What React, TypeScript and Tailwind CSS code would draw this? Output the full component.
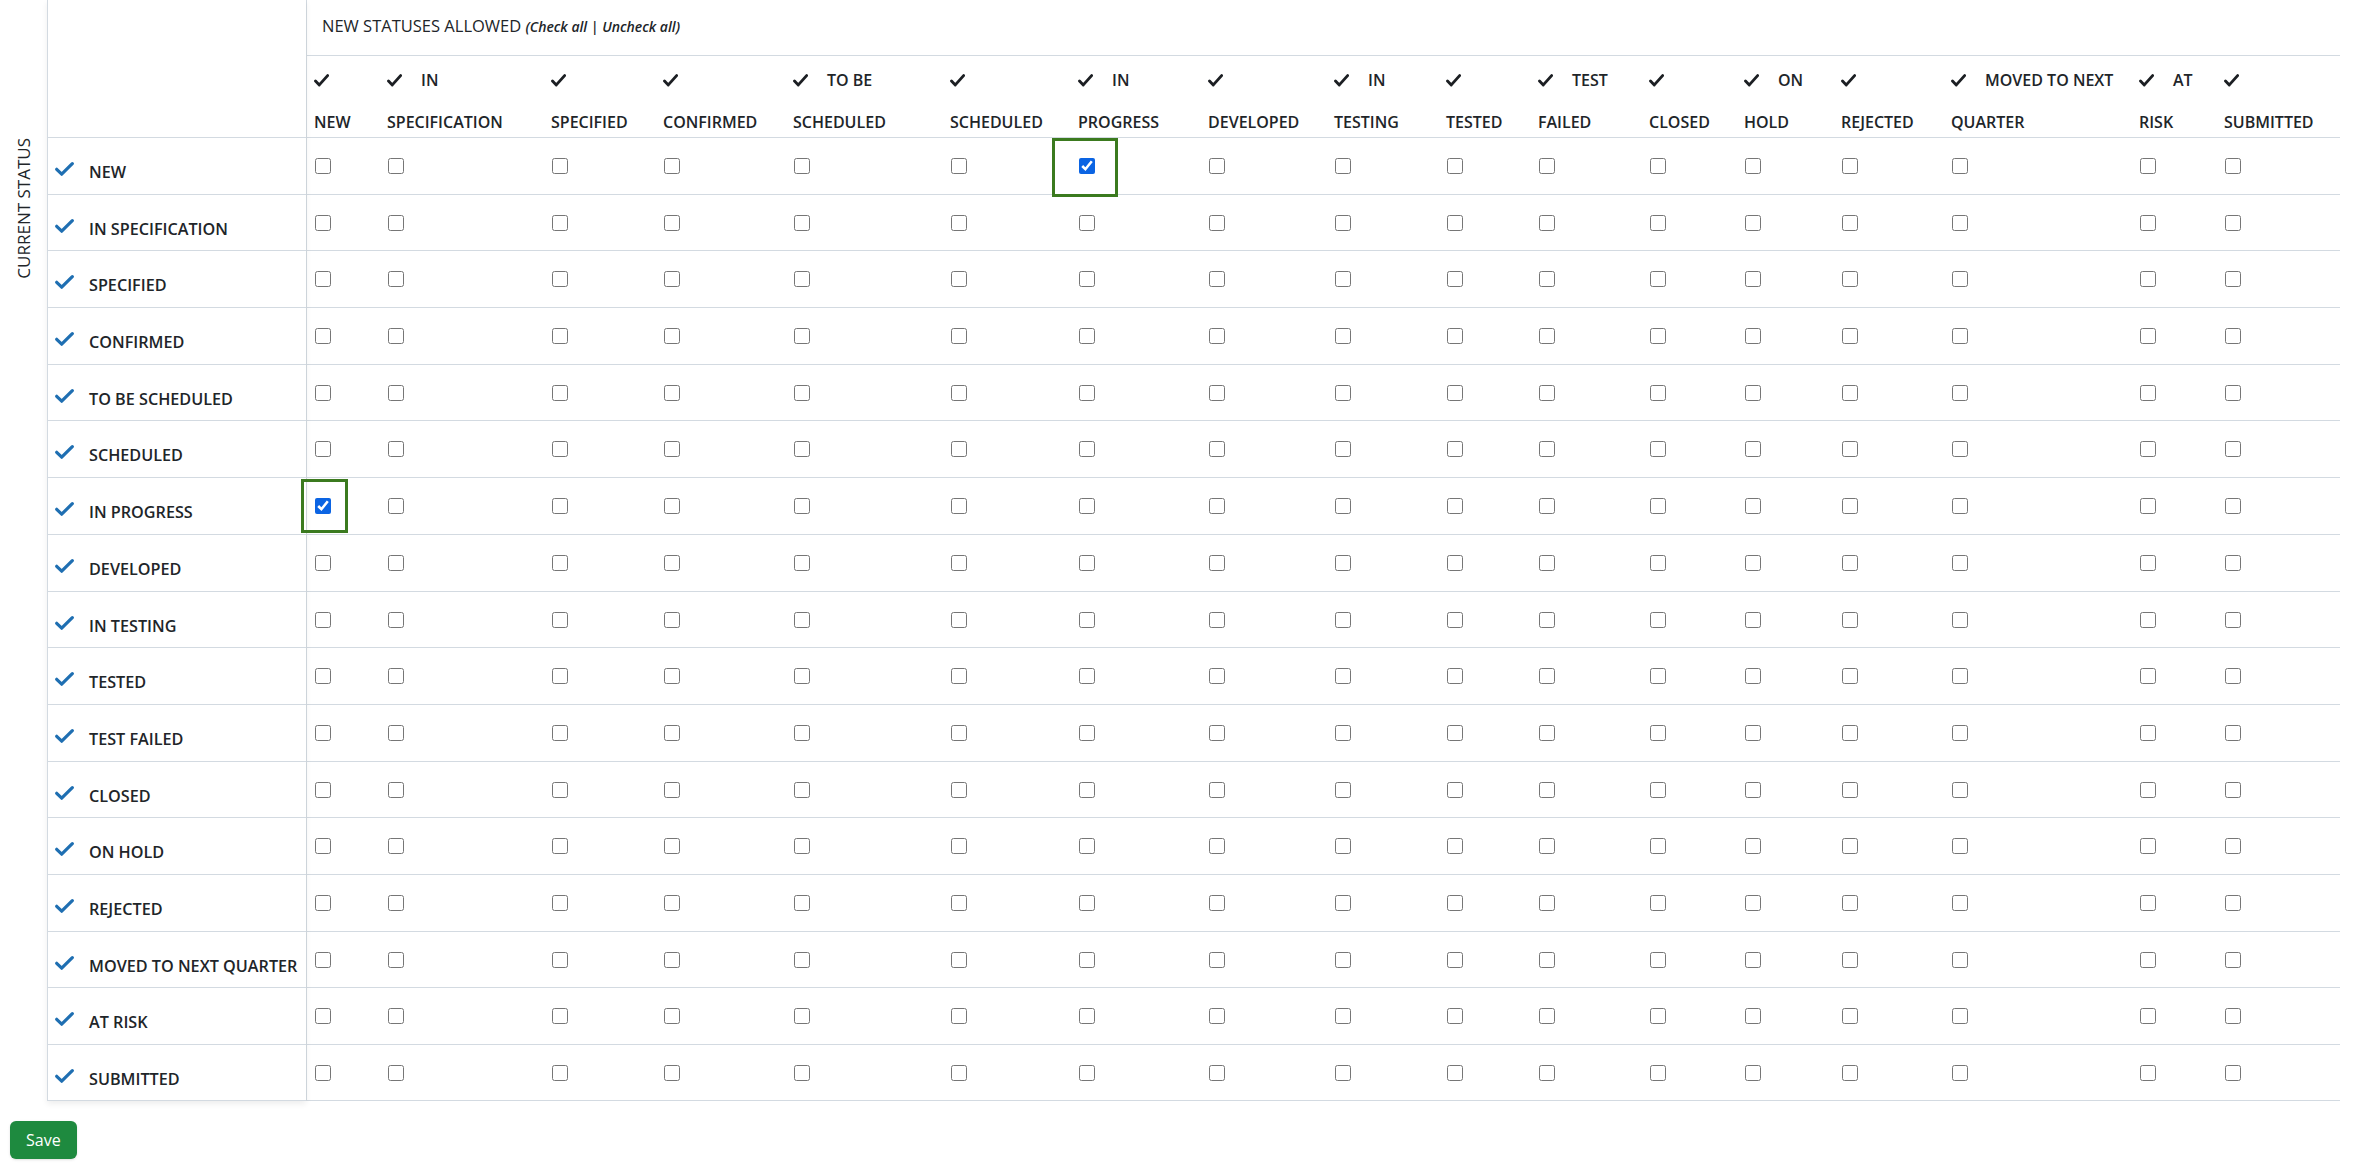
import React from "react";

type Col = { w: string; l1: string; l2: string };

const cols: Col[] = [
  { w: "w-[73px]", l1: "", l2: "NEW" },
  { w: "w-[164px]", l1: "IN", l2: "SPECIFICATION" },
  { w: "w-[112px]", l1: "", l2: "SPECIFIED" },
  { w: "w-[130px]", l1: "", l2: "CONFIRMED" },
  { w: "w-[157px]", l1: "TO BE", l2: "SCHEDULED" },
  { w: "w-[128px]", l1: "", l2: "SCHEDULED" },
  { w: "w-[130px]", l1: "IN", l2: "PROGRESS" },
  { w: "w-[126px]", l1: "", l2: "DEVELOPED" },
  { w: "w-[112px]", l1: "IN", l2: "TESTING" },
  { w: "w-[92px]", l1: "", l2: "TESTED" },
  { w: "w-[111px]", l1: "TEST", l2: "FAILED" },
  { w: "w-[95px]", l1: "", l2: "CLOSED" },
  { w: "w-[97px]", l1: "ON", l2: "HOLD" },
  { w: "w-[110px]", l1: "", l2: "REJECTED" },
  { w: "w-[188px]", l1: "MOVED TO NEXT", l2: "QUARTER" },
  { w: "w-[85px]", l1: "AT", l2: "RISK" },
  { w: "w-[124px]", l1: "", l2: "SUBMITTED" },
];

const rows = [
  "NEW",
  "IN SPECIFICATION",
  "SPECIFIED",
  "CONFIRMED",
  "TO BE SCHEDULED",
  "SCHEDULED",
  "IN PROGRESS",
  "DEVELOPED",
  "IN TESTING",
  "TESTED",
  "TEST FAILED",
  "CLOSED",
  "ON HOLD",
  "REJECTED",
  "MOVED TO NEXT QUARTER",
  "AT RISK",
  "SUBMITTED",
];

const initial: Record<string, boolean> = { "0-6": true, "6-0": true };

function HeadCheck() {
  return (
    <svg width="15" height="13" viewBox="0 0 15 13" className="shrink-0">
      <path d="M1.5 7 L5.3 10.9 L13.6 1.6" fill="none" stroke="#1c1f23" strokeWidth="2.9" strokeLinecap="round" strokeLinejoin="round" />
    </svg>
  );
}

function RowCheck() {
  return (
    <svg width="19" height="14" viewBox="0 0 19 14" className="shrink-0">
      <path d="M1.7 7.3 L6.7 12.2 L17.3 1.7" fill="none" stroke="#1f6fb2" strokeWidth="3.2" strokeLinecap="round" strokeLinejoin="round" />
    </svg>
  );
}

export default function App() {
  const [checked, setChecked] = React.useState<Record<string, boolean>>(initial);
  const font = { fontFamily: '"Open Sans", "Noto Sans", sans-serif' };
  return (
    <div className="relative w-[2359px] min-h-[1171px] bg-white text-[#212529]" style={font}>
      <div className="flex">
        {/* vertical label */}
        <div className="w-[47px] shrink-0 flex flex-col items-center pt-[138px]">
          <div className="[writing-mode:vertical-rl] rotate-180 text-[17px] leading-[20px] text-[#212529] whitespace-nowrap">
            CURRENT STATUS
          </div>
        </div>

        {/* left label column */}
        <div className="w-[259px] shrink-0 border-l border-[#d3dae1] shadow-[0_3px_6px_rgba(0,0,0,0.07)] relative z-10 bg-white">
          <div className="h-[137px]" />
          {rows.map((r) => (
            <div key={r} className="h-[56.7px] border-t border-[#d3dae1] flex items-start pt-[24px] pl-[7px] last:border-b">
              <RowCheck />
              <span className="ml-[15px] text-[16.2px] leading-[20px] font-semibold whitespace-nowrap">{r}</span>
            </div>
          ))}
        </div>

        {/* matrix */}
        <div className="w-[2034px] shrink-0 border-l border-[#d3dae1]">
          <div className="h-[55px] pl-[15px] pt-[14px] leading-[24px] whitespace-nowrap">
            <span className="text-[16.5px]">NEW STATUSES ALLOWED</span>{" "}
            <span className="text-[14px] italic font-semibold">
              (Check all | Uncheck all)
            </span>
          </div>
          <div className="h-[82px] border-t border-[#d3dae1] flex">
            {cols.map((c, i) => (
              <div key={i} className={`${c.w} shrink-0 pl-[7px] pt-[14px]`}>
                <div className="h-[20px] flex items-center">
                  <HeadCheck />
                  {c.l1 && <span className="ml-[19px] text-[16px] font-semibold whitespace-nowrap leading-[20px]">{c.l1}</span>}
                </div>
                <div className="mt-[22px] text-[16px] leading-[20px] font-semibold whitespace-nowrap">{c.l2}</div>
              </div>
            ))}
          </div>
          {rows.map((r, ri) => (
            <div key={r} className="h-[56.7px] border-t border-[#d3dae1] flex last:border-b">
              {cols.map((c, ci) => {
                const k = `${ri}-${ci}`;
                return (
                  <div key={ci} className={`${c.w} shrink-0 pl-[8px] pt-[20px]`}>
                    <input
                      type="checkbox"
                      className="w-4 h-4 m-0 block accent-[#0b64e3]"
                      checked={!!checked[k]}
                      onChange={() => setChecked((p) => ({ ...p, [k]: !p[k] }))}
                    />
                  </div>
                );
              })}
            </div>
          ))}
        </div>
      </div>

      {/* highlight annotations */}
      <div className="absolute left-[1052px] top-[138px] w-[66px] h-[59px] border-[3px] border-[#3b7a1f] pointer-events-none z-20" />
      <div className="absolute left-[301px] top-[479px] w-[47px] h-[54px] border-[3px] border-[#3b7a1f] pointer-events-none z-20" />

      <div className="pl-[10px] pt-[20px]">
        <button className="h-[38px] px-[16px] rounded-[6px] bg-[#1e8a3f] text-white text-[16px] leading-[24px] shadow-sm">
          Save
        </button>
      </div>
    </div>
  );
}
